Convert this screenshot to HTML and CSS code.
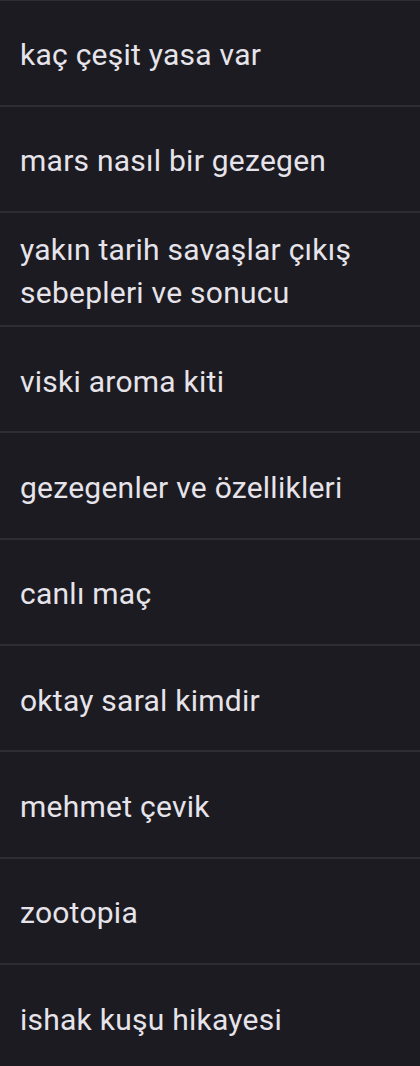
FILE: index.html
```html
<!DOCTYPE html>
<html lang="tr">
<head>
<meta charset="utf-8">
<link rel="stylesheet" href="styles.css">
</head>
<body>
<ul class="list">
  <li class="item">kaç çeşit yasa var</li>
  <li class="item">mars nasıl bir gezegen</li>
  <li class="item">yakın tarih savaşlar çıkış sebepleri ve sonucu</li>
  <li class="item">viski aroma kiti</li>
  <li class="item">gezegenler ve özellikleri</li>
  <li class="item">canlı maç</li>
  <li class="item">oktay saral kimdir</li>
  <li class="item">mehmet çevik</li>
  <li class="item">zootopia</li>
  <li class="item">ishak kuşu hikayesi</li>
</ul>
</body>
</html>
```
FILE: styles.css
```css
html, body {
  margin: 0;
  padding: 0;
  background: #1c1b21;
}
body {
  font-family: Roboto, "Noto Sans", sans-serif;
  color: #e6e4ea;
  height: 1066px;
  overflow: hidden;
}
.list {
  list-style: none;
  margin: -1.5px 0 0;
  padding: 0;
}
.item {
  display: flex;
  align-items: center;
  box-sizing: border-box;
  min-height: 106.3px;
  padding: 15px 40px 11px 20px;
  border-top: 2px solid #2e2d33;
  font-size: 30px;
  line-height: 43px;
  letter-spacing: 0.25px;
}
```
